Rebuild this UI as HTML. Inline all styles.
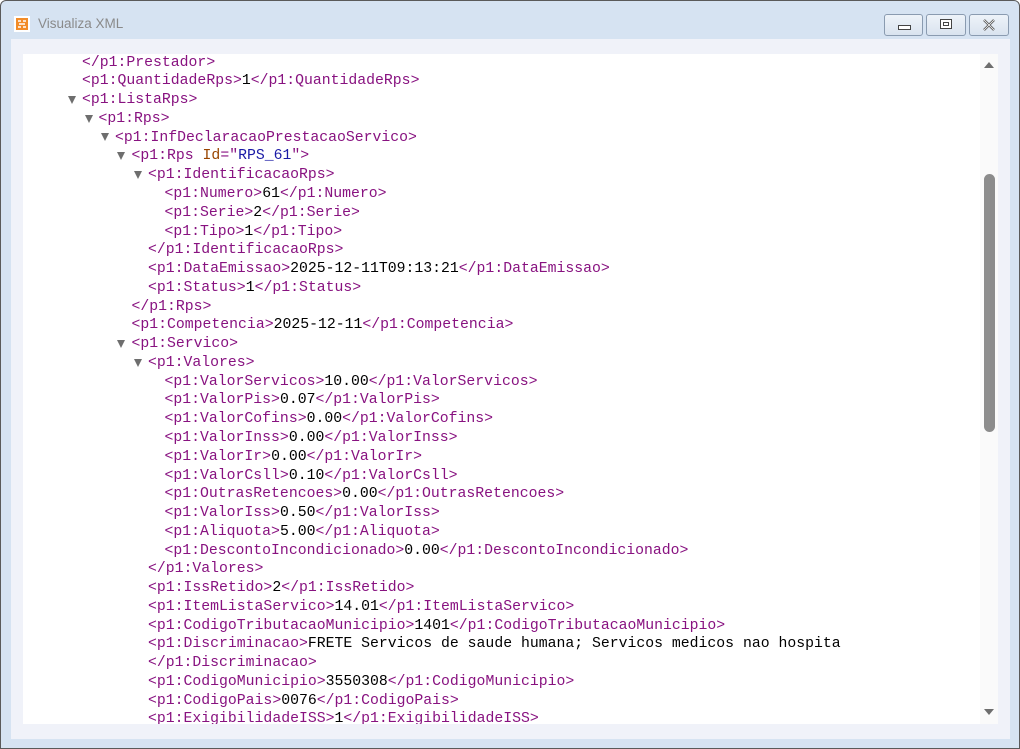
<!DOCTYPE html>
<html><head><meta charset="utf-8"><style>
html,body{margin:0;padding:0;width:1020px;height:749px;overflow:hidden;background:#fff;}
.win{position:absolute;left:0;top:0;width:1018px;height:747px;border:1px solid #5a5a5a;border-radius:6px 6px 0 0;background:#d6e3f2;}
.title{position:absolute;left:37px;top:15px;font:13.5px "Liberation Sans",sans-serif;color:#8a8a8a;}
.icon{position:absolute;left:13px;top:15px;width:16px;height:16px;background:#fff;}
.btn{position:absolute;top:13px;height:20px;border:1px solid #8a9bb0;border-radius:3px;background:linear-gradient(#eef3f9,#d9e3ef);}
.client{position:absolute;left:10px;top:38px;width:999px;height:700px;background:#f0f2f9;}
.box{position:absolute;left:22px;top:53px;width:975px;height:670px;background:#fff;overflow:hidden;}
.sb{position:absolute;left:957px;top:0;width:18px;height:670px;background:#fafafa;}
.thumb{position:absolute;left:4px;top:120px;width:11px;height:258px;background:#8c8c8c;border-radius:6px;}
.l{position:absolute;white-space:pre;font:14.8px/18.77px "Liberation Mono",monospace;color:#000;}
.t{color:#881280}.a{color:#994500}.v{color:#1a1aa6}
.tri{position:absolute;width:0;height:0;border-left:4.5px solid transparent;border-right:4.5px solid transparent;border-top:8px solid #6e6e6e;}
</style></head><body>
<div class="win">
<div class="icon"><svg width="16" height="16"><rect x="2" y="2" width="12" height="12" fill="#f28c28"/><path d="M4 5h3M9 5h3M5 8h6M4 11h3M9 11h3" stroke="#fff" stroke-width="1.6"/></svg></div>
<div class="title">Visualiza XML</div>
<div class="btn" style="left:883px;width:37px"><div style="position:absolute;left:13px;top:10px;width:11px;height:3px;border:1px solid #444;background:#fff"></div></div>
<div class="btn" style="left:925px;width:38px"><div style="position:absolute;left:13px;top:4px;width:10px;height:8px;border:1px solid #444;background:#fff"><div style="margin:2px;height:2px;border:1px solid #444"></div></div></div>
<div class="btn" style="left:968px;width:38px"><svg style="position:absolute;left:12px;top:4px" width="14" height="12"><path d="M2 1L12 11M12 1L2 11" stroke="#555" stroke-width="2.4"/><path d="M2 1L12 11M12 1L2 11" stroke="#fff" stroke-width="0.8"/></svg></div>
<div class="client"></div>
<div class="box">
<div class="sb"><div class="thumb"></div>
<svg style="position:absolute;left:3px;top:7px" width="12" height="8"><path d="M1 7L6 1L11 7Z" fill="#6e6e6e"/></svg>
<svg style="position:absolute;left:3px;top:654px" width="12" height="8"><path d="M1 1L6 7L11 1Z" fill="#6e6e6e"/></svg>
</div>
</div>
<div id="c" style="position:absolute;left:22px;top:53px;width:957px;height:670px;overflow:hidden">
<div style="position:absolute;left:-22px;top:-52px">
<div class="l" style="left:81px;top:51.6px"><span class="t">&lt;/p1:Prestador&gt;</span></div>
<div class="l" style="left:81px;top:70.4px"><span class="t">&lt;p1:QuantidadeRps&gt;</span>1<span class="t">&lt;/p1:QuantidadeRps&gt;</span></div>
<div class="tri" style="left:67px;top:94px"></div><div class="l" style="left:81px;top:89.1px"><span class="t">&lt;p1:ListaRps&gt;</span></div>
<div class="tri" style="left:84px;top:113px"></div><div class="l" style="left:97.5px;top:107.9px"><span class="t">&lt;p1:Rps&gt;</span></div>
<div class="tri" style="left:100px;top:131px"></div><div class="l" style="left:114px;top:126.7px"><span class="t">&lt;p1:InfDeclaracaoPrestacaoServico&gt;</span></div>
<div class="tri" style="left:116px;top:150px"></div><div class="l" style="left:130.5px;top:145.4px"><span class="t">&lt;p1:Rps </span><span class="a">Id</span><span class="t">="</span><span class="v">RPS_61</span><span class="t">"&gt;</span></div>
<div class="tri" style="left:133px;top:169px"></div><div class="l" style="left:147px;top:164.2px"><span class="t">&lt;p1:IdentificacaoRps&gt;</span></div>
<div class="l" style="left:163.5px;top:183px"><span class="t">&lt;p1:Numero&gt;</span>61<span class="t">&lt;/p1:Numero&gt;</span></div>
<div class="l" style="left:163.5px;top:201.7px"><span class="t">&lt;p1:Serie&gt;</span>2<span class="t">&lt;/p1:Serie&gt;</span></div>
<div class="l" style="left:163.5px;top:220.5px"><span class="t">&lt;p1:Tipo&gt;</span>1<span class="t">&lt;/p1:Tipo&gt;</span></div>
<div class="l" style="left:147px;top:239.3px"><span class="t">&lt;/p1:IdentificacaoRps&gt;</span></div>
<div class="l" style="left:147px;top:258px"><span class="t">&lt;p1:DataEmissao&gt;</span>2025-12-11T09:13:21<span class="t">&lt;/p1:DataEmissao&gt;</span></div>
<div class="l" style="left:147px;top:276.8px"><span class="t">&lt;p1:Status&gt;</span>1<span class="t">&lt;/p1:Status&gt;</span></div>
<div class="l" style="left:130.5px;top:295.6px"><span class="t">&lt;/p1:Rps&gt;</span></div>
<div class="l" style="left:130.5px;top:314.3px"><span class="t">&lt;p1:Competencia&gt;</span>2025-12-11<span class="t">&lt;/p1:Competencia&gt;</span></div>
<div class="tri" style="left:116px;top:338px"></div><div class="l" style="left:130.5px;top:333.1px"><span class="t">&lt;p1:Servico&gt;</span></div>
<div class="tri" style="left:133px;top:357px"></div><div class="l" style="left:147px;top:351.9px"><span class="t">&lt;p1:Valores&gt;</span></div>
<div class="l" style="left:163.5px;top:370.6px"><span class="t">&lt;p1:ValorServicos&gt;</span>10.00<span class="t">&lt;/p1:ValorServicos&gt;</span></div>
<div class="l" style="left:163.5px;top:389.4px"><span class="t">&lt;p1:ValorPis&gt;</span>0.07<span class="t">&lt;/p1:ValorPis&gt;</span></div>
<div class="l" style="left:163.5px;top:408.2px"><span class="t">&lt;p1:ValorCofins&gt;</span>0.00<span class="t">&lt;/p1:ValorCofins&gt;</span></div>
<div class="l" style="left:163.5px;top:426.9px"><span class="t">&lt;p1:ValorInss&gt;</span>0.00<span class="t">&lt;/p1:ValorInss&gt;</span></div>
<div class="l" style="left:163.5px;top:445.7px"><span class="t">&lt;p1:ValorIr&gt;</span>0.00<span class="t">&lt;/p1:ValorIr&gt;</span></div>
<div class="l" style="left:163.5px;top:464.5px"><span class="t">&lt;p1:ValorCsll&gt;</span>0.10<span class="t">&lt;/p1:ValorCsll&gt;</span></div>
<div class="l" style="left:163.5px;top:483.2px"><span class="t">&lt;p1:OutrasRetencoes&gt;</span>0.00<span class="t">&lt;/p1:OutrasRetencoes&gt;</span></div>
<div class="l" style="left:163.5px;top:502px"><span class="t">&lt;p1:ValorIss&gt;</span>0.50<span class="t">&lt;/p1:ValorIss&gt;</span></div>
<div class="l" style="left:163.5px;top:520.8px"><span class="t">&lt;p1:Aliquota&gt;</span>5.00<span class="t">&lt;/p1:Aliquota&gt;</span></div>
<div class="l" style="left:163.5px;top:539.5px"><span class="t">&lt;p1:DescontoIncondicionado&gt;</span>0.00<span class="t">&lt;/p1:DescontoIncondicionado&gt;</span></div>
<div class="l" style="left:147px;top:558.3px"><span class="t">&lt;/p1:Valores&gt;</span></div>
<div class="l" style="left:147px;top:577.1px"><span class="t">&lt;p1:IssRetido&gt;</span>2<span class="t">&lt;/p1:IssRetido&gt;</span></div>
<div class="l" style="left:147px;top:595.8px"><span class="t">&lt;p1:ItemListaServico&gt;</span>14.01<span class="t">&lt;/p1:ItemListaServico&gt;</span></div>
<div class="l" style="left:147px;top:614.6px"><span class="t">&lt;p1:CodigoTributacaoMunicipio&gt;</span>1401<span class="t">&lt;/p1:CodigoTributacaoMunicipio&gt;</span></div>
<div class="l" style="left:147px;top:633.4px"><span class="t">&lt;p1:Discriminacao&gt;</span>FRETE Servicos de saude humana; Servicos medicos nao hospita</div>
<div class="l" style="left:147px;top:652.1px"><span class="t">&lt;/p1:Discriminacao&gt;</span></div>
<div class="l" style="left:147px;top:670.9px"><span class="t">&lt;p1:CodigoMunicipio&gt;</span>3550308<span class="t">&lt;/p1:CodigoMunicipio&gt;</span></div>
<div class="l" style="left:147px;top:689.7px"><span class="t">&lt;p1:CodigoPais&gt;</span>0076<span class="t">&lt;/p1:CodigoPais&gt;</span></div>
<div class="l" style="left:147px;top:708.4px"><span class="t">&lt;p1:ExigibilidadeISS&gt;</span>1<span class="t">&lt;/p1:ExigibilidadeISS&gt;</span></div>
</div></div>
</div>
</body></html>
